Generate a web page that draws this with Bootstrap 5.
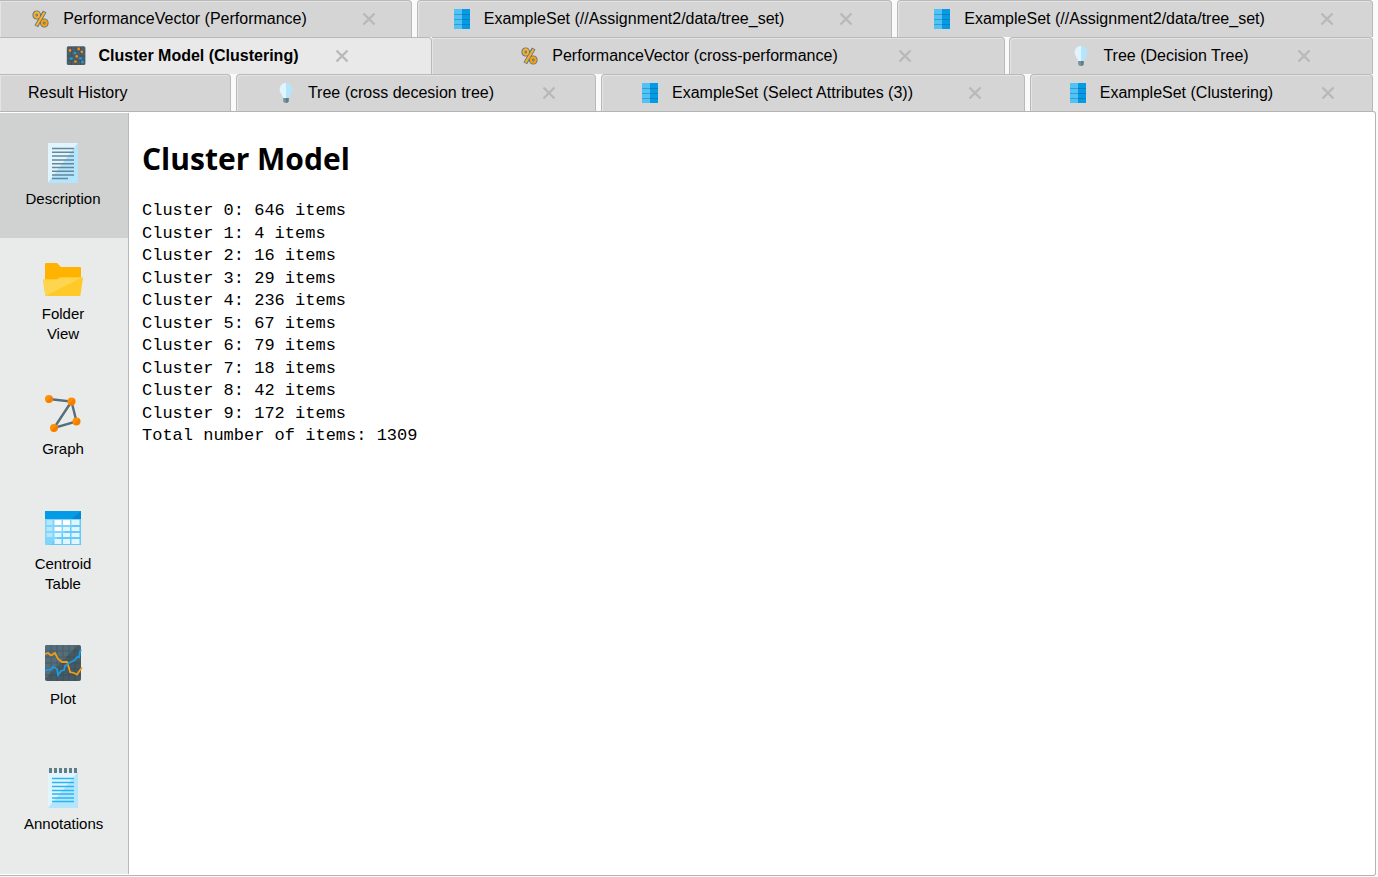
<!DOCTYPE html>
<html lang="en">
<head>
<meta charset="utf-8">
<meta name="viewport" content="width=device-width, initial-scale=1">
<title>Results - Cluster Model</title>
<link href="https://cdn.jsdelivr.net/npm/bootstrap@5.3.0/dist/css/bootstrap.min.css" rel="stylesheet">
<style>
  body { background: #fafafa; color: #000; font-family: "Liberation Sans", Arial, sans-serif; }
  button { color: inherit; }

  /* result tabs */
  .tab-line { display: grid; height: 37px; margin-right: 5px; column-gap: 5px; }
  .line-a { grid-template-columns: 412fr 475fr 476fr; }
  .line-b { grid-template-columns: 432fr 573fr 368fr; column-gap: 0; }
  .line-c { grid-template-columns: 231fr 360fr 424fr 343fr; }
  .result-tab { background: #d5d5d5; border: 1px solid #b9b9b9; border-bottom: 0; border-radius: 4px 4px 0 0; box-shadow: inset 1px 1px 0 #e4e4e4; font-size: 16px; line-height: 20px; }
  .result-tab:first-child { border-left: 0; border-top-left-radius: 0; }
  .result-tab.active { background: #e9e9e9; box-shadow: none; }
  .result-tab.after-active { border-left: 0; border-top-left-radius: 0; }
  .tab-name { gap: 12px; }
  .tab-name svg { width: 20px; height: 20px; flex: none; }
  .tab-close { margin-left: 55px; }
  .close-near { margin-left: 36px; }
  .close-mid { margin-left: 48px; }
  .close-far { margin-left: 60px; }
  .tab-close svg { display: block; width: 14px; height: 14px; }

  /* result panel */
  .result-panel { border: 1px solid #b4b4b4; border-left: 0; border-radius: 0 3px 3px 0; margin: 0 2px 1px 0; padding: 1px 0; background: #fff; }
  .view-bar { width: 129px; background: #e8ebea; border-right: 1px solid #b9b9b9; }
  .view-btn { height: 125px; gap: 6px; padding: 0 2px 0 0; font-size: 15px; line-height: 20px; }
  .view-btn.active { background: #cfd2d1; }
  .view-btn svg { width: 40px; height: 40px; }
  .view-btn span { max-width: 78px; }
  .result-body { padding: 26px 13px; }
  .result-body h1 { font: 700 30px/40px "Open Sans", "Noto Sans", sans-serif; margin: 0 0 21px; }
  .result-body pre { font: 17px/1.324 "Liberation Mono", "Courier New", monospace; }
</style>
</head>
<body>
<svg class="d-none" aria-hidden="true">
  <symbol id="i-close" viewBox="0 0 14 14"><path d="M1.500 1.500 12.500 12.500M12.500 1.500 1.500 12.500" stroke="#b9b9b9" stroke-width="2.400" fill="none"/></symbol>
  <symbol id="i-percent" viewBox="0 0 20 20">
    <g fill="none" stroke="#5d747f" stroke-width="4"><ellipse cx="5.700" cy="6" rx="2.300" ry="2.600"/><ellipse cx="13.300" cy="14" rx="2.300" ry="2.600"/><path d="M13.700 2.500 5.300 17.200"/></g>
    <g fill="none" stroke="#f9b12b" stroke-width="2.100"><ellipse cx="5.700" cy="6" rx="2.300" ry="2.600"/><ellipse cx="13.300" cy="14" rx="2.300" ry="2.600" stroke="#f9a010"/><path d="M13.500 3.200 5.500 16.600"/></g>
  </symbol>
  <symbol id="i-data" viewBox="0 0 20 20">
    <path fill="#4fc3f7" d="M2 0h8v20H2z"/><path fill="#039be5" d="M10 0h8v20h-8z"/>
    <path d="M2 5.500h8M2 10.500h8M2 15.500h8" stroke="#3c9cc6"/><path d="M10 5.500h8M10 10.500h8M10 15.500h8" stroke="#0f7cb5"/>
  </symbol>
  <symbol id="i-bulb" viewBox="0 0 20 20">
    <path fill="#e1f5fe" d="M10 0C6.500 0 3.700 2.600 3.700 6.200c0 4.300 2.800 5 3.300 8.800h3z"/><path fill="#b3e5fc" d="M10 0c3.500 0 6.300 2.600 6.300 6.200 0 4.300-2.800 5-3.300 8.800h-3z"/>
    <path fill="#78909c" d="M7.200 15H10v5c-1.500 0-2.800-.7-2.800-2z"/><path fill="#607d8b" d="M10 15h2.800v3c0 1.300-1.300 2-2.800 2z"/>
  </symbol>
  <symbol id="i-scatter" viewBox="0 0 20 20">
    <rect x=".8" y=".3" width="18.600" height="18.600" rx="1.500" fill="#4a5f6a"/><path d="M5.500 1v18M10 1v18M14.500 1v18M1 5.500h18M1 10h18M1 14.500h18" stroke="#3f525c" stroke-width=".8"/>
    <g fill="#f58a10"><circle cx="4" cy="4.500" r="1.400"/><circle cx="12.700" cy="3" r="1.400"/><circle cx="15.800" cy="5.800" r="1.400"/><circle cx="10.700" cy="10.300" r="1.400"/><circle cx="9.500" cy="15.600" r="1.400"/></g>
    <g fill="#1e9bdf"><circle cx="9" cy="7" r="1.400"/><circle cx="5.300" cy="12.600" r="1.400"/><circle cx="14.500" cy="12.300" r="1.400"/><circle cx="16.400" cy="16" r="1.400"/></g>
  </symbol>
</svg>

<div class="d-flex flex-column min-vh-100">
  <nav aria-label="Results">
    <div class="tab-line line-a">
      <div class="result-tab d-flex align-items-center justify-content-center pe-1">
        <button class="tab-name border-0 bg-transparent p-0 d-flex align-items-center text-nowrap"><svg><use href="#i-percent"/></svg>PerformanceVector (Performance)</button>
        <button class="tab-close border-0 bg-transparent p-0" aria-label="Close"><svg><use href="#i-close"/></svg></button>
      </div>
      <div class="result-tab d-flex align-items-center justify-content-center pe-1">
        <button class="tab-name border-0 bg-transparent p-0 d-flex align-items-center text-nowrap"><svg><use href="#i-data"/></svg>ExampleSet (//Assignment2/data/tree_set)</button>
        <button class="tab-close border-0 bg-transparent p-0" aria-label="Close"><svg><use href="#i-close"/></svg></button>
      </div>
      <div class="result-tab d-flex align-items-center justify-content-center pe-1">
        <button class="tab-name border-0 bg-transparent p-0 d-flex align-items-center text-nowrap"><svg><use href="#i-data"/></svg>ExampleSet (//Assignment2/data/tree_set)</button>
        <button class="tab-close border-0 bg-transparent p-0" aria-label="Close"><svg><use href="#i-close"/></svg></button>
      </div>
    </div>
    <div class="tab-line line-b">
      <div class="result-tab active d-flex align-items-center justify-content-center pe-3">
        <button class="tab-name border-0 bg-transparent p-0 d-flex align-items-center text-nowrap fw-bold"><svg><use href="#i-scatter"/></svg>Cluster Model (Clustering)</button>
        <button class="tab-close close-near border-0 bg-transparent p-0" aria-label="Close"><svg><use href="#i-close"/></svg></button>
      </div>
      <div class="result-tab after-active d-flex align-items-center justify-content-center pe-1">
        <button class="tab-name border-0 bg-transparent p-0 d-flex align-items-center text-nowrap"><svg><use href="#i-percent"/></svg>PerformanceVector (cross-performance)</button>
        <button class="tab-close close-far border-0 bg-transparent p-0" aria-label="Close"><svg><use href="#i-close"/></svg></button>
      </div>
      <div class="result-tab d-flex align-items-center justify-content-center ms-1">
        <button class="tab-name border-0 bg-transparent p-0 d-flex align-items-center text-nowrap"><svg><use href="#i-bulb"/></svg>Tree (Decision Tree)</button>
        <button class="tab-close close-mid border-0 bg-transparent p-0" aria-label="Close"><svg><use href="#i-close"/></svg></button>
      </div>
    </div>
    <div class="tab-line line-c">
      <div class="result-tab d-flex align-items-center ps-4">
        <button class="tab-name border-0 bg-transparent p-0 ps-1 text-nowrap">Result History</button>
      </div>
      <div class="result-tab d-flex align-items-center justify-content-center">
        <button class="tab-name border-0 bg-transparent p-0 d-flex align-items-center text-nowrap"><svg><use href="#i-bulb"/></svg>Tree (cross decesion tree)</button>
        <button class="tab-close close-mid border-0 bg-transparent p-0" aria-label="Close"><svg><use href="#i-close"/></svg></button>
      </div>
      <div class="result-tab d-flex align-items-center justify-content-center pe-1">
        <button class="tab-name border-0 bg-transparent p-0 d-flex align-items-center text-nowrap"><svg><use href="#i-data"/></svg>ExampleSet (Select Attributes (3))</button>
        <button class="tab-close border-0 bg-transparent p-0" aria-label="Close"><svg><use href="#i-close"/></svg></button>
      </div>
      <div class="result-tab d-flex align-items-center justify-content-center">
        <button class="tab-name border-0 bg-transparent p-0 d-flex align-items-center text-nowrap"><svg><use href="#i-data"/></svg>ExampleSet (Clustering)</button>
        <button class="tab-close close-mid border-0 bg-transparent p-0" aria-label="Close"><svg><use href="#i-close"/></svg></button>
      </div>
    </div>
  </nav>

  <div class="result-panel d-flex flex-grow-1">
    <nav class="view-bar d-flex flex-column flex-shrink-0" aria-label="Views">
      <button class="view-btn active border-0 d-flex flex-column align-items-center justify-content-center">
        <svg viewBox="0 0 40 40"><path fill="#e1f5fe" d="M5 0h30L5 40z"/><path fill="#b3e5fc" d="M35 0v40H5z"/><path d="M9 5.500h22M9 9.300h22M9 13.100h22M9 16.900h22M9 20.700h22M9 24.500h22M9 28.300h22M9 32.100h22M9 35.500h16" stroke="#66879a" stroke-width="1.500"/></svg>
        <span>Description</span>
      </button>
      <button class="view-btn bg-transparent border-0 d-flex flex-column align-items-center justify-content-center">
        <svg viewBox="0 -2 40 40"><path fill="#ffb300" d="M2 4q0-1 1-1h11l4 4h19q1 0 1 1v14H2z"/><path fill="#ffca28" d="M0 19.500h14l3-2h23L37.500 35q-.2 1-1.200 1H3.500q-1 0-1.200-1z"/><path fill="#ffd54f" d="M0 19.500h14l3-2h22L2.500 36z"/></svg>
        <span>Folder View</span>
      </button>
      <button class="view-btn bg-transparent border-0 d-flex flex-column align-items-center justify-content-center">
        <svg viewBox="0 0 40 40"><path d="M6 6 28.500 8.500 33.500 28.500 11 35 28.500 8.500" fill="none" stroke="#546e7a" stroke-width="2.400"/><g fill="#ff8f00"><circle cx="6" cy="6" r="4"/><circle cx="28.500" cy="8.500" r="4"/><circle cx="33.500" cy="28.500" r="4"/><circle cx="11" cy="35" r="4"/></g><g fill="#f57c00"><path d="M8.800 3.200a4 4 0 0 1-5.600 5.600zM31.300 5.700a4 4 0 0 1-5.600 5.600zM36.300 25.700a4 4 0 0 1-5.600 5.600zM13.800 32.200a4 4 0 0 1-5.600 5.600z"/></g></svg>
        <span>Graph</span>
      </button>
      <button class="view-btn bg-transparent border-0 d-flex flex-column align-items-center justify-content-center">
        <svg viewBox="0 0 40 40"><path fill="#81d4fa" d="M2 3h36v34H2z"/><path fill="#4fc3f7" d="M38 10v27H6z" opacity=".6"/><path fill="#039be5" d="M2 3h36v8H2z"/><path fill="#0288d1" d="M38 3v8H29z"/><path fill="#b3e5fc" d="M3.500 12h6v5h-6zM3.500 19h6v4h-6zM3.500 25h6v4h-6z"/><path fill="#81d4fa" d="M3.500 31h6v5h-6z"/><path fill="#fff" d="M11.500 12h7v5h-7zM20 12h7v5h-7zM11.500 19h7v4h-7z"/><path fill="#e1f5fe" d="M28.500 12h8v5h-8zM20 19h7v4h-7zM28.500 19h8v4h-8zM11.500 25h7v4h-7zM20 25h7v4h-7zM28.500 25h8v4h-8zM11.500 31h7v5h-7zM20 31h7v5h-7zM28.500 31h8v5h-8z"/></svg>
        <span>Centroid Table</span>
      </button>
      <button class="view-btn bg-transparent border-0 d-flex flex-column align-items-center justify-content-center">
        <svg viewBox="0 0 40 40"><rect x="2" y="2" width="36" height="36" rx="2" fill="#455a64"/><path fill="#546e7a" d="M4 2h31L2 36V4q0-2 2-2z"/><path d="M8 2v36M14 2v36M20 2v36M26 2v36M32 2v36M2 8h36M2 14h36M2 20h36M2 26h36M2 32h36" stroke="#37474f" opacity=".4"/><path d="M2 11 5 10l3 2.500 4-2.500 3 6 4 3h5l2 6 1 4 4 1 3 1.500 2-3 3-4" fill="none" stroke="#f39c12" stroke-width="1.800"/><path d="M2 27.500l3-1 2 .5 3-3 4 2 1 6 3-4 3-1 1-4 4-3 3-1.500 3-1.500 2-3 2 .5 1-6 1-2" fill="none" stroke="#1e9bdf" stroke-width="1.800"/></svg>
        <span>Plot</span>
      </button>
      <button class="view-btn bg-transparent border-0 d-flex flex-column align-items-center justify-content-center">
        <svg viewBox="0 0 40 40"><path fill="#e1f5fe" d="M5 4h30L5 40z"/><path fill="#b3e5fc" d="M35 4v36H5z"/><path d="M6 2.500h29" stroke="#607d8b" stroke-width="5" stroke-dasharray="3 2"/><path d="M9 10.500h22M9 14.500h22M9 18.500h22M9 22.500h22M9 26h22M9 30h22M9 33.500h22" stroke="#29b6f6" stroke-width="1.500"/></svg>
        <span>Annotations</span>
      </button>
    </nav>
    <main class="result-body flex-grow-1">
      <h1>Cluster Model</h1>
<pre class="m-0">Cluster 0: 646 items
Cluster 1: 4 items
Cluster 2: 16 items
Cluster 3: 29 items
Cluster 4: 236 items
Cluster 5: 67 items
Cluster 6: 79 items
Cluster 7: 18 items
Cluster 8: 42 items
Cluster 9: 172 items
Total number of items: 1309</pre>
    </main>
  </div>
</div>
<script src="https://cdn.jsdelivr.net/npm/bootstrap@5.3.0/dist/js/bootstrap.bundle.min.js"></script>
</body>
</html>
